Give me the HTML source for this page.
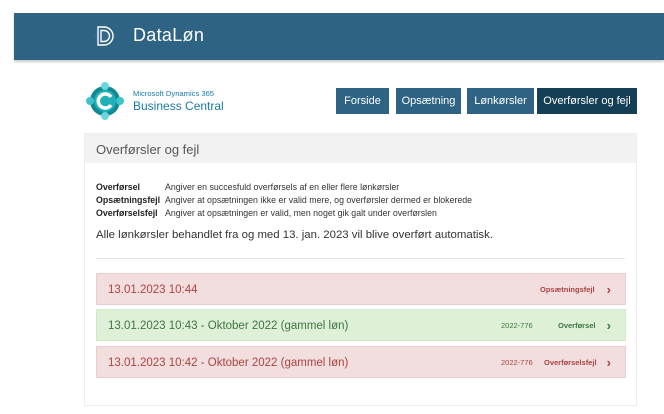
<!DOCTYPE html>
<html><head><meta charset="utf-8"><style>
*{box-sizing:border-box;margin:0;padding:0}
body{width:664px;height:414px;background:#fff;font-family:"Liberation Sans",sans-serif;position:relative;overflow:hidden;color:#333}
.hdr{position:absolute;left:14px;top:13px;width:650px;height:47px;background:#2e6384;box-shadow:0 2px 2px #ccc}
.hdr .t{position:absolute;left:119px;top:12px;color:#fff;font-size:18px;letter-spacing:.3px}
.btn{position:absolute;top:88px;height:26px;background:#2e6384;color:#fff;font-size:11px;line-height:26px;text-align:center}
.card{position:absolute;left:84px;top:133px;width:553px;height:273px;border:1px solid #eee}
.ch{height:29px;background:#f2f2f2;font-size:13px;color:#555;padding:8px 11px}
.leg{position:absolute;left:11px;top:47px;font-size:8.8px;line-height:13px;color:#333}
.leg b{display:inline-block;width:69px;font-weight:bold;color:#222}
.note{position:absolute;left:11px;top:95px;font-size:11.4px;color:#333}
.sep{position:absolute;left:11px;right:11px;top:124px;border-top:1px solid #e5e5e5}
.row{position:absolute;left:11px;width:530px;height:32px;font-size:11.5px;line-height:32px;padding-left:11px}
.r{background:#f2dede;color:#a94442;border:1px solid #ebccd1}
.g{background:#dff0d8;color:#3c763d;border:1px solid #d6e9c6}
.row .s{position:absolute;font-size:7.5px;font-weight:bold}
.row .n{position:absolute;font-size:7.5px;left:404px}
.row .a{position:absolute;right:14px;font-size:13px;font-weight:bold}
</style></head><body>
<div class="hdr">
<svg style="position:absolute;left:77px;top:9px" width="28" height="28" viewBox="0 0 28 28"><path d="M14 1 L27 14 L14 27 L1 14Z" fill="#356b8c" opacity=".6"/><path d="M7 5h6a9 9 0 0 1 0 18H7Z M10 8.5h3a5.5 5.5 0 0 1 0 11h-3Z" fill="none" stroke="#fff" stroke-width="1.4"/></svg>
<div class="t">DataLøn</div></div>
<svg style="position:absolute;left:84px;top:81px" width="42" height="40" viewBox="0 0 42 40"><circle cx="21" cy="20" r="15" fill="#0f8a94"/><circle cx="21" cy="20" r="11" fill="#1fb0b8"/><circle cx="21" cy="5" r="4" fill="#6ad6dc"/><circle cx="21" cy="35" r="4" fill="#6ad6dc"/><circle cx="6" cy="20" r="4" fill="#3cc4cc"/><circle cx="36" cy="20" r="4" fill="#3cc4cc"/><path d="M27 16a7 7 0 1 0 0 8" fill="none" stroke="#fff" stroke-width="3.5"/></svg>
<div style="position:absolute;left:133px;top:89px;font-size:7.6px;color:#1b7aa8">Microsoft Dynamics 365</div>
<div style="position:absolute;left:133px;top:99px;font-size:12px;color:#1b7aa8">Business Central</div>
<div class="btn" style="left:336px;width:53px">Forside</div>
<div class="btn" style="left:396px;width:65px">Opsætning</div>
<div class="btn" style="left:467px;width:67px">Lønkørsler</div>
<div class="btn" style="left:537px;width:100px;background:#153f55">Overførsler og fejl</div>
<div class="card">
<div class="ch">Overførsler og fejl</div>
<div class="leg"><b>Overførsel</b>Angiver en succesfuld overførsels af en eller flere lønkørsler<br><b>Opsætningsfejl</b>Angiver at opsætningen ikke er valid mere, og overførsler dermed er blokerede<br><b>Overførselsfejl</b>Angiver at opsætningen er valid, men noget gik galt under overførslen</div>
<div class="note">Alle lønkørsler behandlet fra og med 13. jan. 2023 vil blive overført automatisk.</div>
<div class="sep"></div>
<div class="row r" style="top:139px">13.01.2023 10:44<span class="s" style="left:443px">Opsætningsfejl</span><span class="a">›</span></div>
<div class="row g" style="top:175px">13.01.2023 10:43 - Oktober 2022 (gammel løn)<span class="n">2022-776</span><span class="s" style="left:461px">Overførsel</span><span class="a">›</span></div>
<div class="row r" style="top:212px">13.01.2023 10:42 - Oktober 2022 (gammel løn)<span class="n">2022-776</span><span class="s" style="left:447px">Overførselsfejl</span><span class="a">›</span></div>
</div>
</body></html>
